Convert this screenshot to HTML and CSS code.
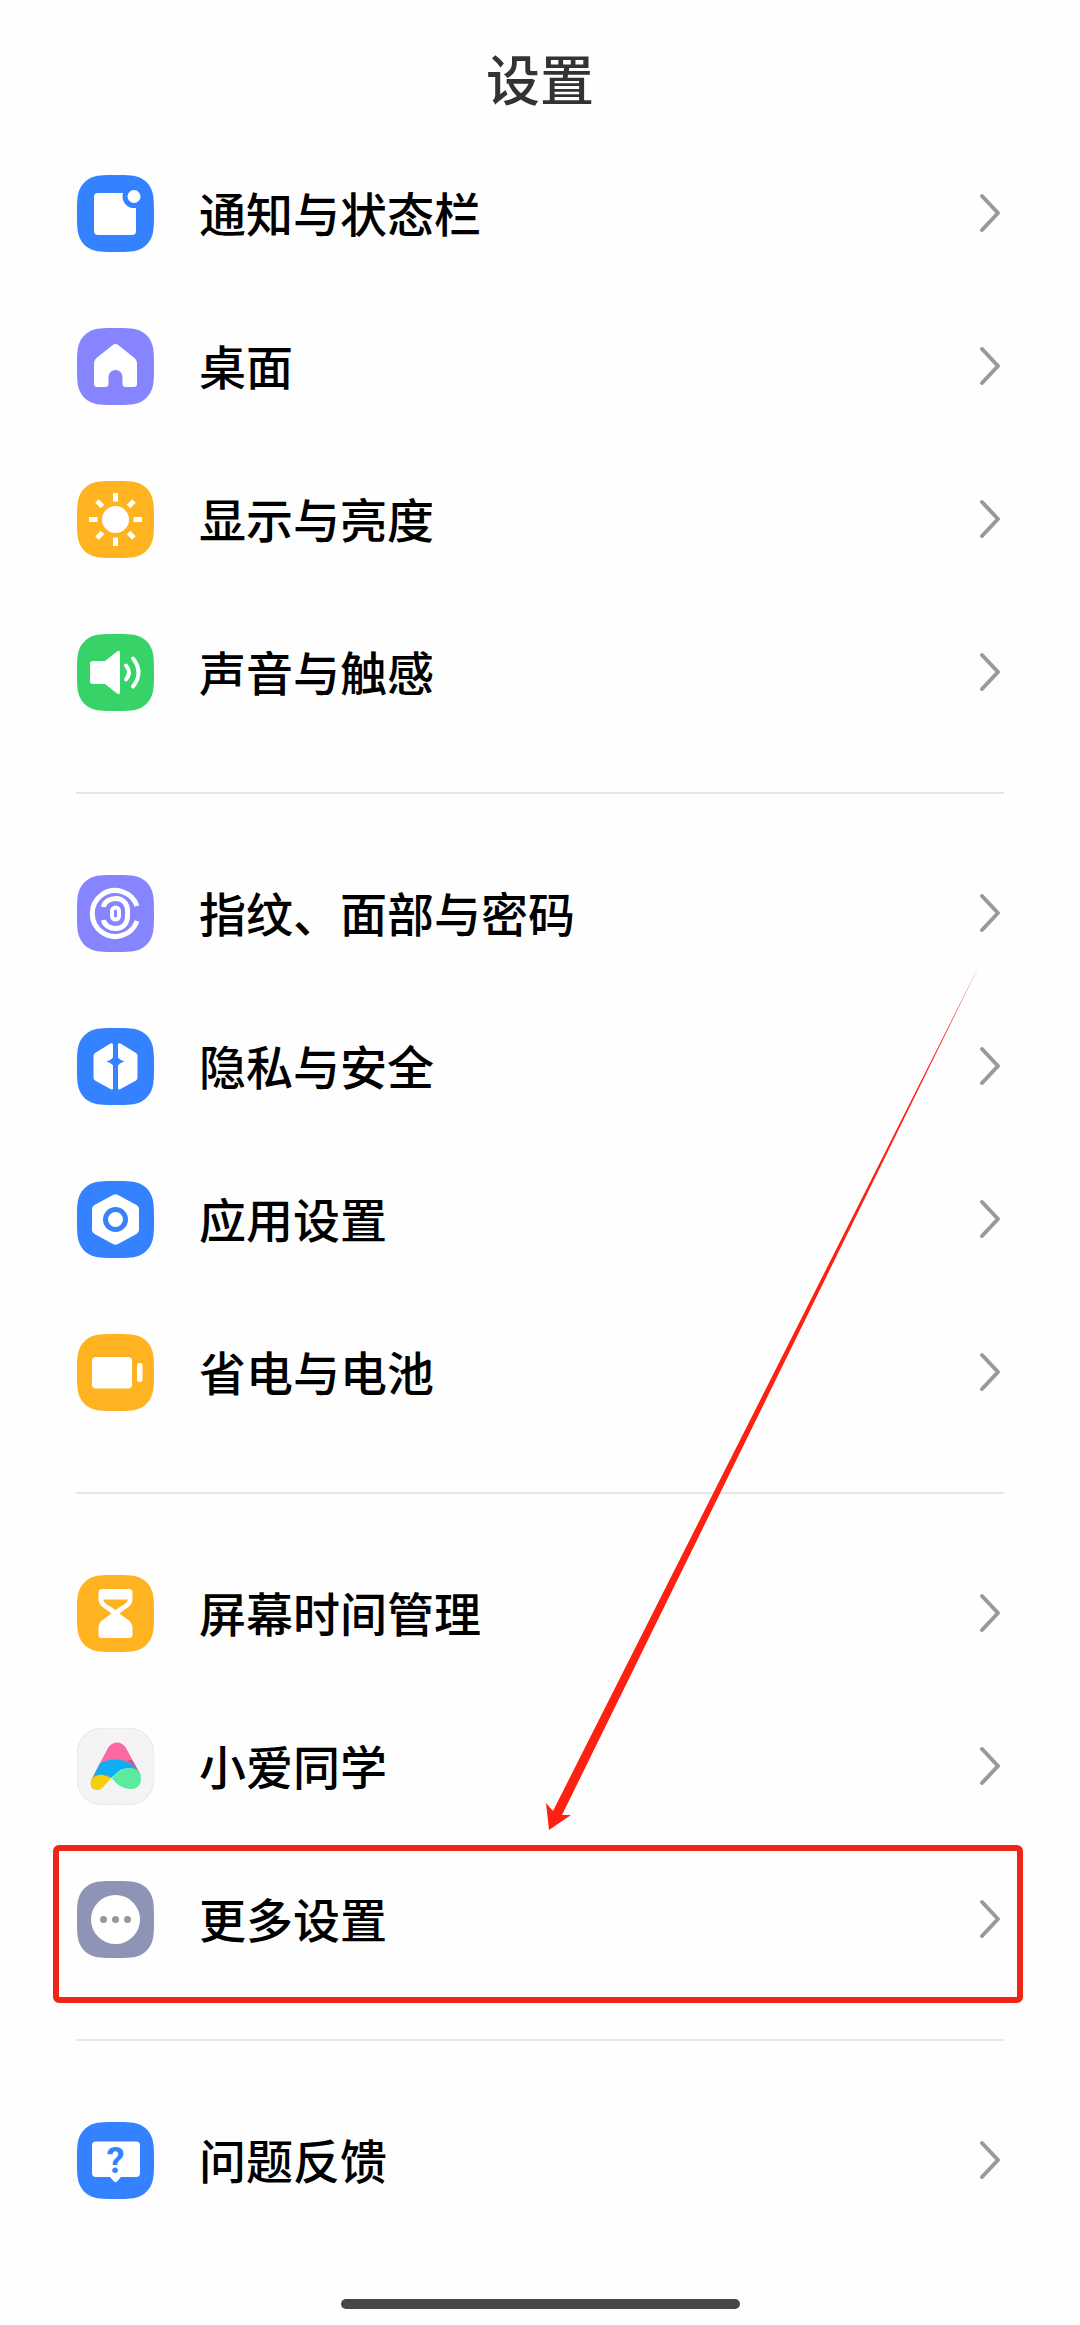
FILE: index.html
```html
<!DOCTYPE html>
<html lang="zh-CN">
<head>
<meta charset="utf-8">
<meta name="viewport" content="width=device-width, initial-scale=1">
<title>设置</title>
<link rel="stylesheet" href="styles.css">
</head>
<body>
  <svg class="defs" aria-hidden="true">
    <symbol id="tile" viewBox="0 0 77 77">
      <path d="M0 38.500C0 26 0 19 3.500 12.500Q7 6.500 12.500 3.500C19 0 26 0 38.500 0S58 0 64.500 3.500Q70.500 6.500 73.500 12.500C77 19 77 26 77 38.500S77 58 73.500 64.500Q70 70.500 64.500 73.500C58 77 51 77 38.500 77S19 77 12.500 73.500Q6.500 70.500 3.500 64.500C0 58 0 51 0 38.500Z"/>
    </symbol>
    <symbol id="chevron" viewBox="0 0 24 44">
      <path d="M3 4L19 21L3 38" fill="none" stroke="#999" stroke-width="4" stroke-linecap="round" stroke-linejoin="round"/>
    </symbol>
  </svg>

  <header class="header"><h1>设置</h1></header>

  <main class="settings">
    <nav class="group">
      <a class="row" href="#notifications">
        <svg class="icon blue" viewBox="0 0 77 77" aria-hidden="true">
          <use href="#tile"/>
          <rect x="17" y="18" width="42" height="42" rx="4" fill="#fff"/>
          <circle cx="57" cy="21.500" r="11.500"/>
          <circle cx="57" cy="21.500" r="6.500" fill="#fff"/>
        </svg>
        <span class="label">通知与状态栏</span>
        <svg class="chevron" aria-hidden="true"><use href="#chevron"/></svg>
      </a>
      <a class="row" href="#home">
        <svg class="icon purple" viewBox="0 0 77 77" aria-hidden="true">
          <use href="#tile"/>
          <path d="M35.500 17.200Q38.500 14.800 41.500 17.200L57.500 30Q60 32 60 35V56Q60 59 57 59H48.500Q45.500 59 45.500 56V49A7 7 0 0 0 31.500 49V56Q31.500 59 28.500 59H20Q17 59 17 56V35Q17 32 19.500 30Z" fill="#fff"/>
        </svg>
        <span class="label">桌面</span>
        <svg class="chevron" aria-hidden="true"><use href="#chevron"/></svg>
      </a>
      <a class="row" href="#display">
        <svg class="icon yellow" viewBox="0 0 77 77" aria-hidden="true">
          <use href="#tile"/>
          <circle cx="38.500" cy="38.500" r="13.500" fill="#fff"/>
          <path d="M38.500 12V20.500M38.500 56.500V65M12 38.500H20.500M56.500 38.500H65M20 20L25.500 25.500M51.500 51.500L57 57M57 20L51.500 25.500M25.500 51.500L20 57" stroke="#fff" stroke-width="5"/>
        </svg>
        <span class="label">显示与亮度</span>
        <svg class="chevron" aria-hidden="true"><use href="#chevron"/></svg>
      </a>
      <a class="row" href="#sound">
        <svg class="icon green" viewBox="0 0 77 77" aria-hidden="true">
          <use href="#tile"/>
          <path d="M16 27H28L40 17.500Q43 15.500 43 19V58Q43 61.500 40 59.500L28 50H16Q13 50 13 47V30Q13 27 16 27Z" fill="#fff"/>
          <path d="M49 31.500Q55 38.500 49 45.500M56 24.500Q67 38.500 56 52.500" fill="none" stroke="#fff" stroke-width="4" stroke-linecap="round"/>
        </svg>
        <span class="label">声音与触感</span>
        <svg class="chevron" aria-hidden="true"><use href="#chevron"/></svg>
      </a>
    </nav>

    <nav class="group">
      <a class="row" href="#password">
        <svg class="icon purple" viewBox="0 0 77 77" aria-hidden="true">
          <use href="#tile"/>
          <g fill="none" stroke="#fff" stroke-width="5">
            <path d="M60 31A23 23 0 1 0 60 46"/>
            <path d="M26.500 32C28 21 50.500 19 50.500 36V41C50.500 58 28 56 26.500 45"/>
            <rect x="35" y="32.500" width="7" height="12" rx="3.500" stroke-width="4"/>
          </g>
        </svg>
        <span class="label">指纹、面部与密码</span>
        <svg class="chevron" aria-hidden="true"><use href="#chevron"/></svg>
      </a>
      <a class="row" href="#privacy">
        <svg class="icon blue" viewBox="0 0 77 77" aria-hidden="true">
          <use href="#tile"/>
          <path d="M36 17V60Q36 62.500 33.500 61L18 52.500Q16.500 51.500 16.500 49.500V28Q16.500 26 18 25L33.500 15.500Q36 14.500 36 17ZM41 17V60Q41 62.500 43.500 61L59 52.500Q60.500 51.500 60.500 49.500V28Q60.500 26 59 25L43.500 15.500Q41 14.500 41 17Z" fill="#fff"/>
          <path d="M38.500 24Q40 31.500 47.500 33.500Q40 35.500 38.500 43Q37 35.500 29.500 33.500Q37 31.500 38.500 24Z"/>
        </svg>
        <span class="label">隐私与安全</span>
        <svg class="chevron" aria-hidden="true"><use href="#chevron"/></svg>
      </a>
      <a class="row" href="#apps">
        <svg class="icon blue" viewBox="0 0 77 77" aria-hidden="true">
          <use href="#tile"/>
          <path d="M36 14Q38.500 12.500 41 14L59.500 24Q62 25.500 62 28V49Q62 51.500 59.500 53L41 63Q38.500 64.500 36 63L17.500 53Q15 51.500 15 49V28Q15 25.500 17.500 24Z" fill="#fff"/>
          <circle cx="38.500" cy="38.500" r="10" fill="#fff" stroke="#3482ff" stroke-width="5"/>
        </svg>
        <span class="label">应用设置</span>
        <svg class="chevron" aria-hidden="true"><use href="#chevron"/></svg>
      </a>
      <a class="row" href="#battery">
        <svg class="icon yellow" viewBox="0 0 77 77" aria-hidden="true">
          <use href="#tile"/>
          <rect x="15" y="23" width="40" height="31.500" rx="4" fill="#fff"/>
          <rect x="60" y="29" width="5.500" height="19" rx="2" fill="#fff"/>
        </svg>
        <span class="label">省电与电池</span>
        <svg class="chevron" aria-hidden="true"><use href="#chevron"/></svg>
      </a>
    </nav>

    <nav class="group">
      <a class="row" href="#screentime">
        <svg class="icon yellow" viewBox="0 0 77 77" aria-hidden="true">
          <use href="#tile"/>
          <path d="M25 14H52Q55.500 14 55.500 17.500V24C55.500 32 47 34 42.500 38.500C47 43 55.500 45 55.500 53V59.500Q55.500 63 52 63H25Q21.500 63 21.500 59.500V53C21.500 45 30 43 34.500 38.500C30 34 21.500 32 21.500 24V17.500Q21.500 14 25 14Z" fill="#fff"/>
          <path d="M26 24.500H51C50 29 43 31.500 38.500 35C34 31.500 27 29 26 24.500Z"/>
        </svg>
        <span class="label">屏幕时间管理</span>
        <svg class="chevron" aria-hidden="true"><use href="#chevron"/></svg>
      </a>
      <a class="row" href="#xiaoai">
        <svg class="icon light" viewBox="0 0 77 77" aria-hidden="true">
          <use href="#tile"/>
          <path d="M14.500 51L31 20Q34.500 14.500 40 14.500T49 20L63 46Q51 34 37 32Q25 33 14.500 51Z" fill="#fb69a5"/>
          <path d="M14 53L23 35.500Q30 31.500 38 31.500Q55 32 62.500 45Q51 36 41 44Q37 48 34 50Q25 43 14 53Z" fill="#0eaef5"/>
          <path d="M53 40Q61 40 63.500 46Q66 61 53 61Q43 61 35 50.500Q43 40 53 40Z" fill="#5ceb9e"/>
          <path d="M14.500 51Q17 47 24 46.500Q30 46.500 34 50.500Q31 53 28 57Q24 62 20 62Q11 61 14.500 51Z" fill="#f5ce0d"/>
          <path d="M14.500 51Q23 43 34 50.500Q30 46.500 24 46.500Q17 47 14.500 51Z" fill="#29936f"/>
          <path d="M50 33Q58 38 62.500 45L63 46L56 33Q53 31 50 33Z" fill="#be5d95"/>
        </svg>
        <span class="label">小爱同学</span>
        <svg class="chevron" aria-hidden="true"><use href="#chevron"/></svg>
      </a>
      <a class="row marked" href="#more">
        <svg class="icon grey" viewBox="0 0 77 77" aria-hidden="true">
          <use href="#tile"/>
          <circle cx="38.500" cy="38.500" r="24.500" fill="#fff"/>
          <g fill="#96979f">
            <circle cx="26.500" cy="38.500" r="3.500"/>
            <circle cx="38.500" cy="38.500" r="3.500"/>
            <circle cx="50.500" cy="38.500" r="3.500"/>
          </g>
        </svg>
        <span class="label">更多设置</span>
        <svg class="chevron" aria-hidden="true"><use href="#chevron"/></svg>
      </a>
    </nav>

    <nav class="group">
      <a class="row" href="#feedback">
        <svg class="icon blue" viewBox="0 0 77 77" aria-hidden="true">
          <use href="#tile"/>
          <path d="M19 19.500H59Q63 19.500 63 23.500V51Q63 55 59 55H44L40 59.500Q38.500 61 37 59.500L33 55H19Q15 55 15 51V23.500Q15 19.500 19 19.500Z" fill="#fff"/>
          <text class="mark" x="38.500" y="51" text-anchor="middle">?</text>
        </svg>
        <span class="label">问题反馈</span>
        <svg class="chevron" aria-hidden="true"><use href="#chevron"/></svg>
      </a>
    </nav>
  </main>

  <div class="homebar"></div>

  <!-- arrow pointing at the marked row -->
  <svg class="arrow" viewBox="0 0 434 866" aria-hidden="true">
    <path d="M433 1L16 850L25 850L3 865L0 838L7 846Z" fill="#fe2011"/>
  </svg>
</body>
</html>
```

FILE: styles.css
```css
* { box-sizing: border-box; }
body { position: relative; margin: 0; background: #fefefe; color: #000; font-family: "Noto Sans CJK SC", sans-serif; }
.defs { position: absolute; width: 0; height: 0; }

.header { height: 137px; padding-top: 38px; text-align: center; }
.header h1 { margin: 0; color: #333; font-size: 54px; line-height: 80px; font-weight: 500; }

.group + .group::before { content: ""; display: block; height: 2px; margin: 43px 76px; background: #e6e6e6; }
.row { position: relative; display: flex; align-items: center; height: 153px; padding: 0 77px; color: inherit; text-decoration: none; }
.label { flex: 1; margin-left: 45px; padding-bottom: 4px; font-size: 47px; line-height: 72px; font-weight: 500; }

.icon { flex: none; width: 77px; height: 77px; }
.blue { fill: #3482ff; }
.purple { fill: #8784ff; }
.yellow { fill: #ffb320; }
.green { fill: #37d368; }
.grey { fill: #8e94b5; }
.light { fill: #f4f4f4; }
.light use { stroke: #e6e6e6; stroke-width: 1px; }
.mark { font: bold 36px Roboto, sans-serif; }
.chevron { flex: none; width: 24px; height: 44px; }

.marked::after { content: ""; position: absolute; top: 2px; right: 57px; bottom: -7px; left: 53px; border: 6px solid #ee2517; border-radius: 6px; }
.arrow { position: absolute; top: 965px; right: 100px; width: 434px; height: 866px; pointer-events: none; }

.homebar { width: 399px; height: 10px; margin: 62px auto 16px; border-radius: 5px; background: #474747; }
```
